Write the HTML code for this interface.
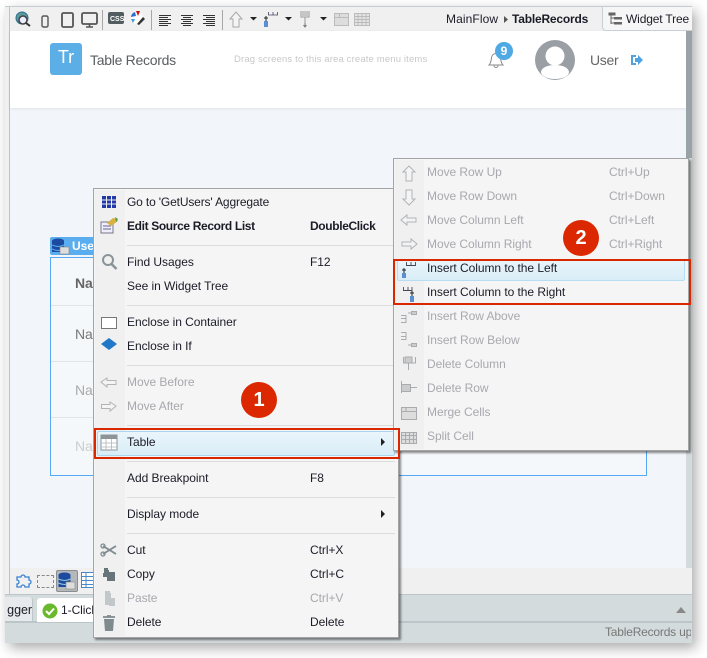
<!DOCTYPE html>
<html><head><meta charset="utf-8"><style>
html,body{margin:0;padding:0;background:#fff}
body{width:707px;height:658px;position:relative;overflow:hidden;font-family:"Liberation Sans",sans-serif;font-size:12px;color:#1c1c28}
.a,.t,svg{position:absolute}
.t{white-space:nowrap;line-height:16px;letter-spacing:-.05px}
.d{color:#a8a8ae}
.b{font-weight:bold;letter-spacing:-.36px}
.r{position:absolute;border:2px solid #d92800;box-sizing:border-box}
.s{position:absolute;height:1px;background:#dcdcdc}
.c{position:absolute;width:36px;height:36px;border-radius:50%;background:#dc2800;color:#fff;font:bold 20px/36px "Liberation Sans",sans-serif;text-align:center}
</style></head><body>
<!-- window -->
<div class="a" style="left:5px;top:6px;width:687px;height:637px;background:#f0f0f0;box-shadow:4px 5px 12px rgba(0,0,0,.33)"></div>
<div class="a" style="left:5px;top:6px;width:687px;height:1px;background:#c4ccd0"></div>
<div class="a" style="left:9px;top:7px;width:1px;height:587px;background:#bcc4c8"></div>
<div class="a" style="left:10px;top:31px;width:676px;height:537px;background:#f2f6fa"></div>
<div class="a" style="left:10px;top:31px;width:676px;height:77px;background:#fff;box-shadow:0 1px 3px rgba(0,0,0,.08)"></div>
<div class="a" style="left:686px;top:31px;width:6px;height:537px;background:#d3dbdd"></div>
<div class="a" style="left:686px;top:31px;width:6px;height:127px;background:#98a2a7"></div>
<div class="a" style="left:5px;top:594px;width:687px;height:28px;background:#d3dbdd;border-top:1px solid #bcc5c8;box-sizing:border-box"></div>
<div class="a" style="left:5px;top:621px;width:687px;height:2px;background:#bcc5c8"></div>
<div class="a" style="left:5px;top:623px;width:687px;height:20px;background:#d3dbdd"></div>
<div class="t" style="left:605px;top:624px;color:#777;overflow:hidden;width:86px;letter-spacing:-.2px">TableRecords up</div>
<svg style="left:675px;top:604px" width="12" height="10"><path d="M1 9L6 3L11 9Z" fill="#888"/></svg>

<!-- toolbar icons -->
<svg style="left:13px;top:9px" width="340" height="22" fill="none">
<circle cx="9" cy="9" r="6" fill="#5a9a9a" stroke="#2b6f8f"/><circle cx="10" cy="11" r="4" fill="#eef" stroke="#444" stroke-width="1.5"/><path d="M13 14l4 3" stroke="#333" stroke-width="2"/>
<rect x="29" y="7" width="6" height="11" rx="1.5" stroke="#555" stroke-width="1.4"/>
<rect x="49" y="4" width="11" height="14" rx="1.5" stroke="#555" stroke-width="1.8"/>
<rect x="69" y="4" width="15" height="11" rx="1.5" stroke="#555" stroke-width="1.8"/><path d="M73 18h7M76.5 15v3" stroke="#555" stroke-width="1.6"/>
<path d="M89.5 1v20" stroke="#a8a8a8"/>
<rect x="95" y="3" width="16" height="12" rx="2" fill="#515d60"/>
<text x="97" y="12" font-family="Liberation Sans" font-size="7" font-weight="bold" fill="#fff">CSS</text>
<circle cx="124" cy="9" r="6" fill="#fff"/><path d="M118 8a6 6 0 0 1 4-5l1 4z" fill="#2a6fd0"/><path d="M123 2h4l-2 5z" fill="#c11"/><path d="M118 10l4 0-2 4z" fill="#3a9ad9"/>
<path d="M124 15l6-7 2 2-6 6z" fill="#333"/>
<path d="M138.500 1v20" stroke="#a8a8a8"/>
<path d="M146 6.500h12M146 8.500h9M146 10.500h12M146 12.500h9M146 14.500h12M146 16.500h9" stroke="#333"/>
<path d="M168 6.500h12M170 8.500h8M168 10.500h12M170 12.500h8M168 14.500h12M170 16.500h8" stroke="#333"/>
<path d="M190 6.500h12M193 8.500h9M190 10.500h12M193 12.500h9M190 14.500h12M193 16.500h9" stroke="#333"/>
<path d="M209.500 1v20" stroke="#a8a8a8"/>
<path d="M217 10l6-7 6 7h-3v8h-6v-8z" stroke="#a5a8aa" fill="#f4f4f4"/>
<path d="M237 8h7l-3.500 3.500z" fill="#222"/>
<path d="M253 7v5M251 9h4" stroke="#222"/><rect x="251" y="12" width="4" height="6" fill="#5c8fd0"/><path d="M255.500 3v3h4.500V3M260 3v3h4.500V3" stroke="#446" stroke-width=".8"/>
<path d="M272 8h7l-3.500 3.500z" fill="#222"/>
<path d="M288 2v6h4v6M296 2v6h-4" stroke="#999"/><rect x="289" y="2" width="6" height="6" fill="#c4c6c8"/><path d="M292 14v4M290.500 16l1.500 2 1.500-2" stroke="#777"/>
<path d="M307 8h7l-3.500 3.500z" fill="#222"/>
<rect x="321.500" y="4.500" width="14" height="12" fill="#ddd" stroke="#bbb"/><path d="M321 8.500h14M326.500 4v4" stroke="#bbb"/>
</svg>
<svg style="left:354px;top:13px" width="17" height="14" fill="none"><rect x=".5" y=".5" width="15" height="12" fill="#e4e4e4" stroke="#bbb"/><path d="M0 3.500h16M0 6.500h16M0 9.500h16M4 0v13M8 0v13M12 0v13" stroke="#bbb"/></svg>
<div class="t" style="left:446px;top:11px;letter-spacing:.1px">MainFlow</div>
<svg style="left:503px;top:15px" width="6" height="9"><path d="M1 1l4 3.500-4 3.500z" fill="#555"/></svg>
<div class="t b" style="left:512px;top:11px;letter-spacing:-.2px">TableRecords</div>
<div class="a" style="left:602px;top:7px;width:90px;height:24px;background:#f6f6f6;border:solid #c8d0d4;border-width:0 0 1px 1px;border-bottom-left-radius:4px;box-sizing:border-box"></div>
<svg style="left:608px;top:12px" width="15" height="15"><path d="M1 1h6v2H1zM3 3v9M3 6h3M3 11h3" stroke="#666" fill="#666"/><rect x="6" y="5" width="8" height="2.500" fill="#666"/><rect x="6" y="10" width="8" height="2.500" fill="#666"/></svg>
<div class="t" style="left:626px;top:11px;letter-spacing:-.15px">Widget Tree</div>

<!-- app header -->
<div class="a" style="left:50px;top:43px;width:32px;height:32px;border-radius:3px;background:#5caee6;color:#fff;font-size:18px;line-height:29px;text-align:center">Tr</div>
<div class="t" style="left:90px;top:52px;font-size:14px;color:#5a5e62;letter-spacing:-.28px">Table Records</div>
<div class="t" style="left:234px;top:52px;font-size:9.500px;color:#c8c8c8;letter-spacing:.15px">Drag screens to this area create menu items</div>
<svg style="left:487px;top:50px" width="18" height="18" fill="none"><path d="M2 15c2-2 2-4 2.500-7a4.500 4.500 0 0 1 9 0c.5 3 .5 5 2.500 7zM7 15.500a2 2 0 0 0 4 0" stroke="#888"/></svg>
<div class="a" style="left:495px;top:42px;width:18px;height:18px;border-radius:50%;background:#4fa9e3;color:#fff;font:bold 12px/18px 'Liberation Sans',sans-serif;text-align:center">9</div>
<svg style="left:534px;top:39px" width="42" height="42"><circle cx="21" cy="21" r="20" fill="#999fa4"/><circle cx="21" cy="17" r="9.500" fill="#fff"/><ellipse cx="21" cy="33" rx="14" ry="7" fill="#fff"/></svg>
<div class="t" style="left:590px;top:52px;font-size:14px;color:#666;letter-spacing:-.3px">User</div>
<svg style="left:630px;top:53px" width="14" height="14"><path d="M1 2h5v2H3v6h3v2H1z" fill="#4fa3e3"/><path d="M5 5h3V2l5 5-5 5V9H5z" fill="#4fa3e3"/></svg>

<!-- table -->
<div class="a" style="left:50px;top:237px;width:50px;height:18px;background:#5aaef0;border-radius:2px"></div>
<svg style="left:52px;top:238px" width="18" height="17"><ellipse cx="6" cy="3" rx="6" ry="2.500" fill="#1c4aa0"/><rect y="3" width="12" height="11" fill="#1c4aa0"/><path d="M0 7q6 3 12 0M0 11q6 3 12 0" stroke="#5aaef0" fill="none"/><rect x="8" y="9" width="9" height="7" fill="#ddd" stroke="#888" stroke-width=".6"/></svg>
<div class="t" style="left:72px;top:238px;color:#fff;font-weight:bold">User</div>
<div class="a" style="left:50px;top:257px;width:597px;height:219px;box-sizing:border-box;border:1px solid #55a9f5;background:#f5f8fb"></div>
<div class="a" style="left:51px;top:305px;width:595px;height:1px;background:#e2e4e6"></div>
<div class="a" style="left:51px;top:361px;width:595px;height:1px;background:#e2e4e6"></div>
<div class="a" style="left:51px;top:417px;width:595px;height:1px;background:#e2e4e6"></div>
<div class="t" style="left:75px;top:275px;font-size:14px;font-weight:bold;color:#666">Name</div>
<div class="t" style="left:75px;top:326px;font-size:14px;color:#777">Name</div>
<div class="t" style="left:75px;top:382px;font-size:14px;color:#aaa">Name</div>
<div class="t" style="left:75px;top:438px;font-size:14px;color:#ccc">Name</div>

<!-- bottom toolbar -->
<svg style="left:14px;top:572px" width="24" height="18" fill="none"><path d="M2 6h4a2 2 0 1 1 4 0h4v3a2 2 0 1 1 0 4v3h-4a2 2 0 1 0-4 0H2v-3a2 2 0 1 0 0-4z" stroke="#3a7fd0" stroke-width="1.300" transform="translate(1 -1)"/></svg>
<div class="a" style="left:37px;top:575px;width:15px;height:11px;border:1px dashed #888"></div>
<div class="a" style="left:56px;top:570px;width:22px;height:22px;background:#b4b8ba;border:1px solid #8a8e90;border-radius:2px;box-sizing:border-box"></div>
<svg style="left:58px;top:572px" width="18" height="18"><ellipse cx="6.500" cy="3" rx="6" ry="2.500" fill="#1c4aa0"/><rect x=".5" y="3" width="12" height="12" fill="#1c4aa0"/><path d="M.5 7q6 3 12 0M.5 11q6 3 12 0" stroke="#9cd" fill="none"/><rect x="8" y="10" width="9" height="7" fill="#ddd" stroke="#888" stroke-width=".6"/></svg>
<svg style="left:81px;top:572px" width="13" height="17" fill="none"><rect x=".5" y=".5" width="13" height="15" fill="#fff" stroke="#4a88c8"/><path d="M0 4.500h13M0 8.500h13M0 12.500h13M5 0v16" stroke="#4a88c8"/></svg>
<!-- tabs -->
<div class="a" style="left:5px;top:597px;width:27px;height:24px;background:#e6eaec;border-right:1px solid #bcc5c8;border-top-right-radius:3px"></div>
<div class="t" style="left:5px;top:602px;font-size:12.500px;width:27px;overflow:hidden;text-align:right;direction:rtl">gger</div>
<div class="a" style="left:37px;top:598px;width:70px;height:24px;background:#fff;border-radius:3px 3px 0 0"></div>
<svg style="left:42px;top:603px" width="16" height="16"><circle cx="8" cy="8" r="7.500" fill="#6ab82c"/><path d="M4 8l3 3 5-5.500" stroke="#fff" stroke-width="2" fill="none"/></svg>
<div class="t" style="left:61px;top:602px">1-Click</div>

<!-- context menu -->
<div class="a" style="left:93px;top:188px;width:306px;height:450px;background:#f5f5f5;border:1px solid #a4a4a4;box-sizing:border-box;box-shadow:2px 2px 2px rgba(0,0,0,.45)"></div>
<div class="a" style="left:95px;top:190px;width:30px;height:446px;background:#f0f0f0"></div>
<div class="s" style="left:127px;top:245px;width:268px"></div>
<div class="s" style="left:127px;top:305px;width:268px"></div>
<div class="s" style="left:127px;top:365px;width:268px"></div>
<div class="s" style="left:127px;top:425px;width:268px"></div>
<div class="s" style="left:127px;top:461px;width:268px"></div>
<div class="s" style="left:127px;top:497px;width:268px"></div>
<div class="s" style="left:127px;top:533px;width:268px"></div>
<div class="a" style="left:97px;top:431px;width:298px;height:25px;background:linear-gradient(#eaf5fb,#d9edf7);border:1px solid #a8d6f0;border-radius:2px;box-sizing:border-box"></div>
<div class="t" style="left:127px;top:194px;letter-spacing:-.15px">Go to 'GetUsers' Aggregate</div>
<div class="t b" style="left:127px;top:218px">Edit Source Record List</div>
<div class="t b" style="left:310px;top:218px">DoubleClick</div>
<div class="t" style="left:127px;top:254px">Find Usages</div>
<div class="t" style="left:310px;top:254px">F12</div>
<div class="t" style="left:127px;top:278px">See in Widget Tree</div>
<div class="t" style="left:127px;top:314px">Enclose in Container</div>
<div class="t" style="left:127px;top:338px">Enclose in If</div>
<div class="t d" style="left:127px;top:374px">Move Before</div>
<div class="t d" style="left:127px;top:398px">Move After</div>
<div class="t" style="left:127px;top:434px">Table</div>
<div class="t" style="left:127px;top:470px">Add Breakpoint</div>
<div class="t" style="left:310px;top:470px">F8</div>
<div class="t" style="left:127px;top:506px">Display mode</div>
<div class="t" style="left:127px;top:542px">Cut</div>
<div class="t" style="left:310px;top:542px">Ctrl+X</div>
<div class="t" style="left:127px;top:566px">Copy</div>
<div class="t" style="left:310px;top:566px">Ctrl+C</div>
<div class="t d" style="left:127px;top:590px">Paste</div>
<div class="t d" style="left:310px;top:590px">Ctrl+V</div>
<div class="t" style="left:127px;top:614px">Delete</div>
<div class="t" style="left:310px;top:614px">Delete</div>
<svg style="left:380px;top:438px" width="6" height="9"><path d="M1 0l4 4-4 4z" fill="#222"/></svg>
<svg style="left:380px;top:510px" width="6" height="9"><path d="M1 0l4 4-4 4z" fill="#222"/></svg>
<svg style="left:96px;top:190px" width="28" height="446" fill="none">
<path d="M6 6h14v12H6z" fill="#2438a8"/><path d="M6 10h14M6 14h14M10.500 6v12M15.500 6v12" stroke="#f0f0f0"/>
<rect x="5" y="32" width="12" height="11" fill="#eef" stroke="#778"/><path d="M7 36h8M7 39h8" stroke="#668"/><path d="M11 33l6-5 4 1 1 2-7 5z" fill="#d8b040"/><path d="M19 27l3 2-2 3z" fill="#5a9a40"/>
<circle cx="12" cy="70" r="5" stroke="#8a9498" stroke-width="2"/><path d="M15.500 74l5 5" stroke="#8a9498" stroke-width="2.500"/>
<rect x="5.500" y="127.500" width="15" height="11" fill="#fff" stroke="#777"/>
<path d="M13 148l8 6-8 6-8-6z" fill="#1f78c8"/>
<path d="M5 192l6-4v2.500h9v4h-9v2.500z" fill="#f4f4f4" stroke="#b0b4b6"/>
<path d="M20 216l-6-4v2.500H5.500v4H14v2.500z" fill="#f4f4f4" stroke="#b0b4b6"/>
<rect x="5" y="245" width="16" height="15" fill="#fff" stroke="#8c9498"/><rect x="5" y="245" width="16" height="4" fill="#8c9498"/><path d="M5 253h16M5 257h16M10 249v11M15.500 249v11" stroke="#b0b6b8" stroke-width=".8"/>
<path d="M7 356l13 8M7 364l13-8" stroke="#7e8a8e" stroke-width="1.800"/><circle cx="7" cy="356" r="2" stroke="#7e8a8e" stroke-width="1.300"/><circle cx="7" cy="364" r="2" stroke="#7e8a8e" stroke-width="1.300"/>
<path d="M8 378h4v6H8zM10 380h3v4h-3z" fill="#66757a"/><rect x="11" y="382" width="8" height="9" fill="#66757a"/><rect x="7" y="383" width="4" height="4" fill="#66757a"/>
<path d="M9 401h5v2h1v12H9z" fill="#c2c8ca"/><rect x="13" y="408" width="6" height="8" fill="#c2c8ca"/>
<path d="M7 427h12M11 426h4" stroke="#7e8a8e" stroke-width="1.800"/><path d="M8 429h10l-1 12H9z" fill="#7e8a8e"/>
</svg>

<!-- submenu -->
<div class="a" style="left:393px;top:158px;width:296px;height:293px;background:#f5f5f5;border:1px solid #a4a4a4;box-sizing:border-box;box-shadow:2px 2px 2px rgba(0,0,0,.45)"></div>
<div class="a" style="left:395px;top:160px;width:29px;height:289px;background:#f0f0f0"></div>
<div class="a" style="left:397px;top:259px;width:288px;height:22px;background:linear-gradient(#eaf5fb,#d9edf7);border:1px solid #b8dcf2;border-radius:2px;box-sizing:border-box"></div>
<div class="t d" style="left:427px;top:164px">Move Row Up</div><div class="t d" style="left:609px;top:164px">Ctrl+Up</div>
<div class="t d" style="left:427px;top:188px">Move Row Down</div><div class="t d" style="left:609px;top:188px">Ctrl+Down</div>
<div class="t d" style="left:427px;top:212px">Move Column Left</div><div class="t d" style="left:609px;top:212px">Ctrl+Left</div>
<div class="t d" style="left:427px;top:236px">Move Column Right</div><div class="t d" style="left:609px;top:236px">Ctrl+Right</div>
<div class="t" style="left:427px;top:260px">Insert Column to the Left</div>
<div class="t" style="left:427px;top:284px">Insert Column to the Right</div>
<div class="t d" style="left:427px;top:308px">Insert Row Above</div>
<div class="t d" style="left:427px;top:332px">Insert Row Below</div>
<div class="t d" style="left:427px;top:356px">Delete Column</div>
<div class="t d" style="left:427px;top:380px">Delete Row</div>
<div class="t d" style="left:427px;top:404px">Merge Cells</div>
<div class="t d" style="left:427px;top:428px">Split Cell</div>
<svg style="left:396px;top:160px" width="28" height="288" fill="none">
<g stroke="#b0b4b6" fill="#f4f4f4">
<path d="M13 6l6 6h-3v9h-6v-9H7z"/>
<path d="M10 30h6v9h3l-6 6-6-6h3z"/>
<path d="M5 60l6-5v3h9v4h-9v3z"/>
<path d="M21 84l-6-5v3H6v4h9v3z"/>
</g>
<path d="M8 108v5M6 110h4" stroke="#222"/><rect x="6" y="113" width="4" height="5" fill="#5c8fd0"/><path d="M10.500 102v3.500H15V102M15 102v3.500h4.500V102" stroke="#445" stroke-width=".9"/>
<path d="M7.500 127v3.500H12V127M12 127v3.500h4V127" stroke="#445" stroke-width=".9"/><path d="M16 131v5M14 133h4" stroke="#222"/><rect x="14" y="136" width="4" height="6" fill="#5c8fd0"/>
<g stroke="#a8acae"><path d="M5 155.500h5v3H5M5 158.500h5v4H5M12 153h3"/><rect x="15.500" y="151.500" width="5" height="3" fill="#ccc"/><path d="M5 172.500h5v4H5M5 176.500h5v3H5M12 185h3"/><rect x="15.500" y="183.500" width="5" height="3" fill="#ccc"/>
<path d="M7.500 197v6h5v7M19.500 197v6h-7"/><rect x="9" y="197" width="7" height="6" fill="#ccc"/>
<rect x="5.500" y="224.500" width="9" height="7" fill="#ccc"/><path d="M14 227.500h7M5.500 221v12"/>
<rect x="5.500" y="247.500" width="15" height="12" fill="#ddd"/><path d="M5 251.500h16M10 247v4"/>
<rect x="5.500" y="272.500" width="15" height="11" fill="#ddd"/><path d="M5 275.500h16M5 279.500h16M9.500 272v12M13.500 272v12M17.500 272v12"/></g>
</svg>

<!-- callouts -->
<div class="r" style="left:94px;top:428px;width:306px;height:31px"></div>
<div class="r" style="left:393px;top:259px;width:298px;height:46px"></div>
<div class="c" style="left:241px;top:382px">1</div>
<div class="c" style="left:563px;top:220px">2</div>
</body></html>
